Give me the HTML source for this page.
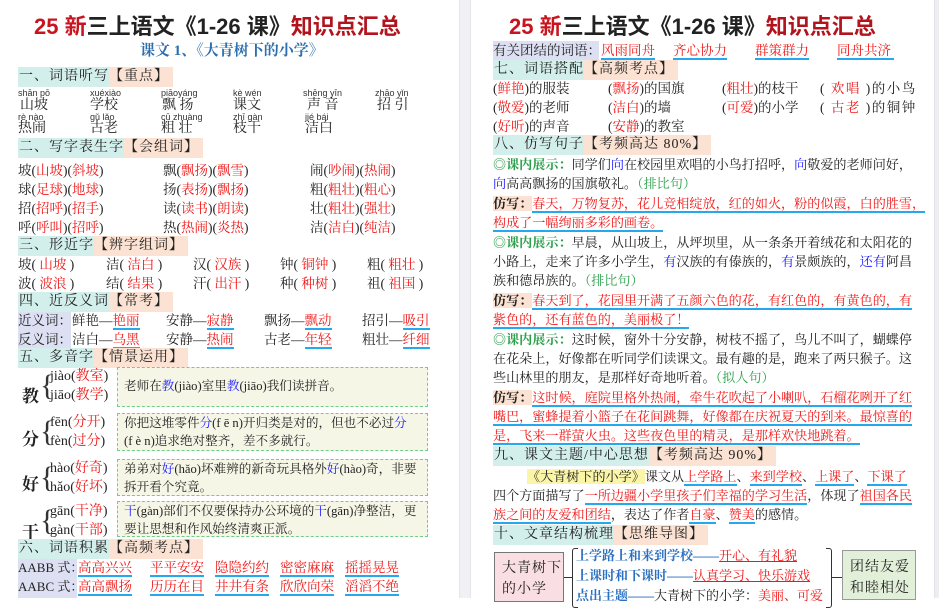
<!DOCTYPE html>
<html><head><meta charset="utf-8"><style>
*{margin:0;padding:0;box-sizing:border-box}
body{width:939px;height:598px;overflow:hidden;background:#fff;position:relative;font-family:"Liberation Serif","Noto Serif CJK SC",serif;color:#222}
.a{position:absolute;white-space:nowrap;font-size:13.5px;line-height:19px}
.r{color:#f01818}.b{color:#1a1aff}.g{color:#2aa04a}
.u{border-bottom:2px solid #26a8ee}
.h{position:absolute;height:20px;font-size:14px;line-height:20px;white-space:nowrap;letter-spacing:1px}
.h .c{background:#d3efeb;padding-left:1px;display:inline-block}
.h .p{background:#fbe2d2;display:inline-block;padding-right:4px}
.title{position:absolute;font-family:"Liberation Sans","Noto Sans CJK SC",sans-serif;font-weight:bold;font-size:22px;line-height:28px;white-space:nowrap}
.py{position:absolute;font-family:"Liberation Sans",sans-serif;font-size:9px;color:#333;line-height:9px}
.box{position:absolute;left:117px;width:311px;background:#f6f6e6;border:1px dashed #6fcf8a;font-size:12.6px;line-height:18px;padding:5px 6px;white-space:nowrap}
.big{position:absolute;left:22px;font-size:17px;font-weight:bold}
.pl{position:absolute;left:44px;font-size:14px;line-height:19px}
.pl span.br{position:absolute;left:-4px;top:2px;font-size:30px;line-height:34px;font-weight:100;color:#333}
.lav{position:absolute;background:#dde0f2}
.p2 .a{font-size:13.1px}
</style></head><body>
<div style="position:absolute;left:459px;top:0;width:12px;height:598px;background:#f1f1f5;border-left:1px solid #e4e4ea;border-right:1px solid #e4e4ea"></div>
<div style="position:absolute;left:934px;top:0;width:5px;height:598px;background:#eeeef2;border-left:1px solid #e2e2e8"></div>

<!-- LEFT PAGE -->
<div class="title" style="left:34px;top:13px"><span style="color:#c8141e">25 新</span>三上语文《1-26 课》<span style="color:#b2141e">知识点汇总</span></div>
<div class="a" style="left:140px;top:42px;font-size:15px;color:#2c6eae;font-weight:bold">课文 1、《大青树下的小学》</div>
<div class="h" style="left:18px;top:67px"><span class="c">一、词语听写</span><span class="p">【重点】</span></div>
<div class="py" style="left:18px;top:89px">shān pō</div><div class="py" style="left:90px;top:89px">xuéxiào</div><div class="py" style="left:161px;top:89px">piāoyáng</div><div class="py" style="left:233px;top:89px">kè wén</div><div class="py" style="left:303px;top:89px">shēng yīn</div><div class="py" style="left:375px;top:89px">zhāo yǐn</div>
<div class="a" style="left:20px;top:96px;font-size:14px">山坡</div><div class="a" style="left:90px;top:96px;font-size:14px">学校</div><div class="a" style="left:162px;top:96px;font-size:14px">飘 扬</div><div class="a" style="left:233px;top:96px;font-size:14px">课文</div><div class="a" style="left:307px;top:96px;font-size:14px">声 音</div><div class="a" style="left:377px;top:96px;font-size:14px">招 引</div>
<div class="py" style="left:18px;top:113px">rè nào</div><div class="py" style="left:90px;top:113px">gǔ lǎo</div><div class="py" style="left:161px;top:113px">cū zhuàng</div><div class="py" style="left:233px;top:113px">zhī gàn</div><div class="py" style="left:305px;top:113px">jié bái</div>
<div class="a" style="left:18px;top:119px;font-size:14px">热闹</div><div class="a" style="left:90px;top:119px;font-size:14px">古老</div><div class="a" style="left:161px;top:119px;font-size:14px">粗 壮</div><div class="a" style="left:233px;top:119px;font-size:14px">枝干</div><div class="a" style="left:305px;top:119px;font-size:14px">洁白</div>
<div class="h" style="left:18px;top:138px"><span class="c">二、写字表生字</span><span class="p">【会组词】</span></div>
<div class="a" style="left:18px;top:161px">坡(<span class="r">山坡</span>)(<span class="r">斜坡</span>)</div><div class="a" style="left:163px;top:161px">飘(<span class="r">飘扬</span>)(<span class="r">飘雪</span>)</div><div class="a" style="left:310px;top:161px">闹(<span class="r">吵闹</span>)(<span class="r">热闹</span>)</div>
<div class="a" style="left:18px;top:180px">球(<span class="r">足球</span>)(<span class="r">地球</span>)</div><div class="a" style="left:163px;top:180px">扬(<span class="r">表扬</span>)(<span class="r">飘扬</span>)</div><div class="a" style="left:310px;top:180px">粗(<span class="r">粗壮</span>)(<span class="r">粗心</span>)</div>
<div class="a" style="left:18px;top:199px">招(<span class="r">招呼</span>)(<span class="r">招手</span>)</div><div class="a" style="left:163px;top:199px">读(<span class="r">读书</span>)(<span class="r">朗读</span>)</div><div class="a" style="left:310px;top:199px">壮(<span class="r">粗壮</span>)(<span class="r">强壮</span>)</div>
<div class="a" style="left:18px;top:218px">呼(<span class="r">呼叫</span>)(<span class="r">招呼</span>)</div><div class="a" style="left:163px;top:218px">热(<span class="r">热闹</span>)(<span class="r">炎热</span>)</div><div class="a" style="left:310px;top:218px">洁(<span class="r">洁白</span>)(<span class="r">纯洁</span>)</div>
<div class="h" style="left:18px;top:236px"><span class="c">三、形近字</span><span class="p">【辨字组词】</span></div>
<div class="a" style="left:18px;top:255px">坡( <span class="r">山坡</span> )</div><div class="a" style="left:106px;top:255px">洁( <span class="r">洁白</span> )</div><div class="a" style="left:193px;top:255px">汉( <span class="r">汉族</span> )</div><div class="a" style="left:280px;top:255px">钟( <span class="r">铜钟</span> )</div><div class="a" style="left:367px;top:255px">粗( <span class="r">粗壮</span> )</div>
<div class="a" style="left:18px;top:274px">波( <span class="r">波浪</span> )</div><div class="a" style="left:106px;top:274px">结( <span class="r">结果</span> )</div><div class="a" style="left:193px;top:274px">汗( <span class="r">出汗</span> )</div><div class="a" style="left:280px;top:274px">种( <span class="r">种树</span> )</div><div class="a" style="left:367px;top:274px">祖( <span class="r">祖国</span> )</div>
<div class="h" style="left:18px;top:292px"><span class="c">四、近反义词</span><span class="p">【常考】</span></div>
<div class="lav" style="left:18px;top:312px;width:53px;height:36px"></div>
<div class="a" style="left:18px;top:311px">近义词：鲜艳—<span class="r u">艳丽</span></div><div class="a" style="left:166px;top:311px">安静—<span class="r u">寂静</span></div><div class="a" style="left:264px;top:311px">飘扬—<span class="r u">飘动</span></div><div class="a" style="left:362px;top:311px">招引—<span class="r u">吸引</span></div>
<div class="a" style="left:18px;top:330px">反义词：洁白—<span class="r u">乌黑</span></div><div class="a" style="left:166px;top:330px">安静—<span class="r u">热闹</span></div><div class="a" style="left:264px;top:330px">古老—<span class="r u">年轻</span></div><div class="a" style="left:362px;top:330px">粗壮—<span class="r u">纤细</span></div>
<div class="h" style="left:18px;top:348px"><span class="c">五、多音字</span><span class="p">【情景运用】</span></div>

<div class="big" style="top:382px">教</div>
<div class="pl" style="top:367px"><span class="br">{</span><span style="margin-left:6px">jiào(<span class="r">教室</span>)</span><br><span style="margin-left:6px">jiāo(<span class="r">教学</span>)</span></div>
<div class="box" style="top:367px;height:40px;padding-top:9px">老师在<span class="b">教</span>(jiào)室里<span class="b">教</span>(jiāo)我们读拼音。</div>

<div class="big" style="top:425px">分</div>
<div class="pl" style="top:413px"><span class="br">{</span><span style="margin-left:6px">fēn(<span class="r">分开</span>)</span><br><span style="margin-left:6px">fèn(<span class="r">过分</span>)</span></div>
<div class="box" style="top:413px;height:38px;padding-top:0">你把这堆零件<span class="b">分</span>(f ē n)开归类是对的，但也不必过<span class="b">分</span><br>(f è n)追求绝对整齐，差不多就行。</div>

<div class="big" style="top:470px">好</div>
<div class="pl" style="top:459px"><span class="br">{</span><span style="margin-left:6px">hào(<span class="r">好奇</span>)</span><br><span style="margin-left:6px">hǎo(<span class="r">好坏</span>)</span></div>
<div class="box" style="top:459px;height:37px;padding-top:0">弟弟对<span class="b">好</span>(hǎo)坏难辨的新奇玩具格外<span class="b">好</span>(hào)奇，非要<br>拆开看个究竟。</div>

<div class="big" style="top:518px">干</div>
<div class="pl" style="top:502px"><span class="br">{</span><span style="margin-left:6px">gān(<span class="r">干净</span>)</span><br><span style="margin-left:6px">gàn(<span class="r">干部</span>)</span></div>
<div class="box" style="top:501px;height:36px;padding-top:0"><span class="b">干</span>(gàn)部们不仅要保持办公环境的<span class="b">干</span>(gān)净整洁，更<br>要让思想和作风始终清爽正派。</div>

<div class="h" style="left:18px;top:539px"><span class="c">六、词语积累</span><span class="p">【高频考点】</span></div>
<div class="lav" style="left:18px;top:559px;width:59px;height:39px"></div>
<div class="a" style="left:18px;top:558px;font-size:13px">AABB 式：</div><div class="a" style="left:78px;top:558px"><span class="r u">高高兴兴</span></div><div class="a" style="left:150px;top:558px"><span class="r u">平平安安</span></div><div class="a" style="left:215px;top:558px"><span class="r u">隐隐约约</span></div><div class="a" style="left:280px;top:558px"><span class="r u">密密麻麻</span></div><div class="a" style="left:345px;top:558px"><span class="r u">摇摇晃晃</span></div>
<div class="a" style="left:18px;top:577px;font-size:13px">AABC 式：</div><div class="a" style="left:78px;top:577px"><span class="r u">高高飘扬</span></div><div class="a" style="left:150px;top:577px"><span class="r u">历历在目</span></div><div class="a" style="left:215px;top:577px"><span class="r u">井井有条</span></div><div class="a" style="left:280px;top:577px"><span class="r u">欣欣向荣</span></div><div class="a" style="left:345px;top:577px"><span class="r u">滔滔不绝</span></div>

<!-- RIGHT PAGE -->
<div class="p2">
<div class="title" style="left:509px;top:13px"><span style="color:#c8141e">25 新</span>三上语文《1-26 课》<span style="color:#b2141e">知识点汇总</span></div>
<div class="lav" style="left:493px;top:41px;width:106px;height:19px"></div>
<div class="a" style="left:493px;top:41px;font-size:13.5px">有关团结的词语：<span class="r u">风雨同舟</span></div><div class="a" style="left:673px;top:41px;font-size:13.5px"><span class="r u">齐心协力</span></div><div class="a" style="left:755px;top:41px;font-size:13.5px"><span class="r u">群策群力</span></div><div class="a" style="left:837px;top:41px;font-size:13.5px"><span class="r u">同舟共济&nbsp;</span></div>
<div class="h" style="left:493px;top:60px"><span class="c">七、词语搭配</span><span class="p">【高频考点】</span></div>
<div class="a" style="left:493px;top:79px;font-size:13.5px">(<span class="r">鲜艳</span>)的服装</div><div class="a" style="left:608px;top:79px;font-size:13.5px">(<span class="r">飘扬</span>)的国旗</div><div class="a" style="left:722px;top:79px;font-size:13.5px">(<span class="r">粗壮</span>)的枝干</div><div class="a" style="left:820px;top:79px;letter-spacing:1.5px;font-size:13.5px">( <span class="r">欢唱</span> )的小鸟</div>
<div class="a" style="left:493px;top:98px;font-size:13.5px">(<span class="r">敬爱</span>)的老师</div><div class="a" style="left:608px;top:98px;font-size:13.5px">(<span class="r">洁白</span>)的墙</div><div class="a" style="left:722px;top:98px;font-size:13.5px">(<span class="r">可爱</span>)的小学</div><div class="a" style="left:820px;top:98px;letter-spacing:1.5px;font-size:13.5px">( <span class="r">古老</span> )的铜钟</div>
<div class="a" style="left:493px;top:117px;font-size:13.5px">(<span class="r">好听</span>)的声音</div><div class="a" style="left:608px;top:117px;font-size:13.5px">(<span class="r">安静</span>)的教室</div>
<div class="h" style="left:493px;top:135px"><span class="c">八、仿写句子</span><span class="p">【考频高达 80%】</span></div>
<div class="a" style="left:493px;top:155px"><span class="g" style="font-weight:bold">◎课内展示：</span>同学们<span class="b">向</span>在校园里欢唱的小鸟打招呼，<span class="b">向</span>敬爱的老师问好，</div>
<div class="a" style="left:493px;top:174px"><span class="b">向</span>高高飘扬的国旗敬礼。<span class="g">（排比句）</span></div>
<div class="a" style="left:493px;top:194px"><b style="background:#fbe2d2">仿写：</b><span class="r u">春天，万物复苏，花儿竞相绽放，红的如火，粉的似霞，白的胜雪，</span></div>
<div class="a" style="left:493px;top:213px"><span class="r u">构成了一幅绚丽多彩的画卷。</span></div>
<div class="a" style="left:493px;top:233px"><span class="g" style="font-weight:bold">◎课内展示：</span>早晨，从山坡上，从坪坝里，从一条条开着绒花和太阳花的</div>
<div class="a" style="left:493px;top:252px">小路上，走来了许多小学生，<span class="b">有</span>汉族的有傣族的，<span class="b">有</span>景颇族的，<span class="b">还有</span>阿昌</div>
<div class="a" style="left:493px;top:271px">族和德昂族的。<span class="g">（排比句）</span></div>
<div class="a" style="left:493px;top:291px"><b style="background:#fbe2d2">仿写：</b><span class="r u">春天到了，花园里开满了五颜六色的花，有红色的，有黄色的，有</span></div>
<div class="a" style="left:493px;top:310px"><span class="r u">紫色的，还有蓝色的，美丽极了！</span></div>
<div class="a" style="left:493px;top:330px"><span class="g" style="font-weight:bold">◎课内展示：</span>这时候，窗外十分安静，树枝不摇了，鸟儿不叫了，蝴蝶停</div>
<div class="a" style="left:493px;top:349px">在花朵上，好像都在听同学们读课文。最有趣的是，跑来了两只猴子。这</div>
<div class="a" style="left:493px;top:368px">些山林里的朋友，是那样好奇地听着。<span class="g">（拟人句）</span></div>
<div class="a" style="left:493px;top:388px"><b style="background:#fbe2d2">仿写：</b><span class="r u">这时候，庭院里格外热闹，牵牛花吹起了小喇叭，石榴花咧开了红</span></div>
<div class="a" style="left:493px;top:407px"><span class="r u">嘴巴，蜜蜂提着小篮子在花间跳舞，好像都在庆祝夏天的到来。最惊喜的</span></div>
<div class="a" style="left:493px;top:426px"><span class="r u">是，飞来一群萤火虫。这些夜色里的精灵，是那样欢快地跳着。</span></div>
<div class="h" style="left:493px;top:446px"><span class="c">九、课文主题/中心思想</span><span class="p">【考频高达 90%】</span></div>
<div class="a" style="left:527px;top:467px"><span style="background:#fbf5a8">《大青树下的小学》</span>课文从<span class="r u">上学路上</span>、<span class="r u">来到学校</span>、<span class="r u">上课了</span>、<span class="r u">下课了</span></div>
<div class="a" style="left:493px;top:486px">四个方面描写了<span class="r u">一所边疆小学里孩子们幸福的学习生活</span>，体现了<span class="r u">祖国各民</span></div>
<div class="a" style="left:493px;top:505px"><span class="r u">族之间的友爱和团结</span>，表达了作者<span class="r u">自豪</span>、<span class="r u">赞美</span>的感情。</div>
<div class="h" style="left:493px;top:525px"><span class="c">十、文章结构梳理</span><span class="p">【思维导图】</span></div>
<div style="position:absolute;left:494px;top:552px;width:70px;height:50px;background:#f9dfe3;border:1px solid #777;font-size:14px;line-height:21px;padding:5px 0 0 7px;letter-spacing:1px">大青树下<br>的小学</div>
<div style="position:absolute;left:564px;top:577px;width:8px;border-top:1px solid #333"></div>
<div style="position:absolute;left:572px;top:548px;width:6px;height:60px;border:1px solid #333;border-right:none;border-radius:3px 0 0 3px"></div>
<div class="a" style="left:576px;top:546px;color:#2a6fc0;font-weight:bold;font-size:13px">上学路上和来到学校——<span class="r" style="font-weight:normal;text-decoration:underline">开心、有礼貌</span></div>
<div class="a" style="left:576px;top:566px;color:#2a6fc0;font-weight:bold;font-size:13px">上课时和下课时——<span class="r" style="font-weight:normal;text-decoration:underline">认真学习、快乐游戏</span></div>
<div class="a" style="left:576px;top:586px;color:#2a6fc0;font-weight:bold;font-size:13px">点出主题——<span style="color:#222;font-weight:normal">大青树下的小学：</span><span class="r" style="font-weight:normal">美丽、可爱</span></div>
<div style="position:absolute;left:826px;top:548px;width:6px;height:60px;border:1px solid #333;border-left:none;border-radius:0 3px 3px 0;background:#fff"></div>
<div style="position:absolute;left:832px;top:577px;width:10px;border-top:1px solid #333"></div>
<div style="position:absolute;left:842px;top:550px;width:74px;height:50px;background:#e3f0d9;border:1px solid #999;font-size:14px;line-height:21px;padding:6px 0 0 7px;letter-spacing:1px">团结友爱<br>和睦相处</div>
</div>
</body></html>
